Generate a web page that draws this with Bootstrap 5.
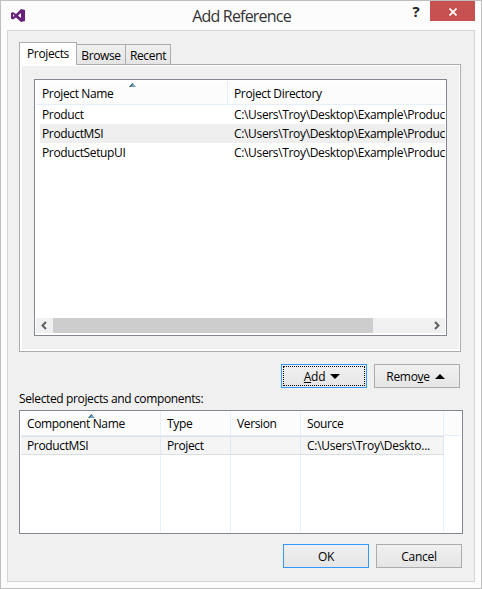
<!DOCTYPE html>
<html lang="en">
<head>
<meta charset="utf-8">
<title>Add Reference</title>
<link href="https://cdn.jsdelivr.net/npm/bootstrap@5.3.0/dist/css/bootstrap.min.css" rel="stylesheet">
<style>
body{font:12px/19px "Open Sans","Noto Sans",sans-serif;letter-spacing:-.36px;color:#000;overflow:hidden}
.window{width:482px;height:589px;background:#fcfcfc;border:1px solid #bfbfbf}
.titlebar{height:29px;padding:0 6px 0 9px}
.title{font-size:16px;line-height:30px;letter-spacing:-.8px;color:#333;padding-left:50px}
.vs-logo{margin-top:7px}
.help{width:18px;height:20px;line-height:20px;font-size:15px;font-weight:700;color:#222;background:none}
.close-btn{width:45px;height:20px;background:#c75050;margin-left:5px;padding:1px 0 0 1px}
.client{width:468px;height:552px;margin-left:6px;padding:11px 11px 0;background:#f0f0f0;border:1px solid #d5d5d5}
.tabs{height:22px;position:relative;z-index:1}
.tab-item{height:21px;border:1px solid #acacac;border-bottom:0;background:linear-gradient(#f0f0f0,#e5e5e5);line-height:21px;text-align:center;margin-right:-1px;margin-bottom:-1px}
.tab-item:not(.active){border-bottom:1px solid #acacac}
.tab-item.active{height:23px;background:#fff;line-height:21px}
.pane{width:442px;height:288px;border:1px solid #acacac;background:#f0f0f0;box-shadow:inset 0 0 0 1px #fff,inset 2px 0 #fff,inset -1px -2px #fff;padding:14px 0 0 14px}
.list{border:1px solid #828790;background:#fff;padding:1px}
.projects{width:413px;height:257px}
.list-head{height:24px;line-height:25px;border-bottom:1px solid #e5eefa;background:#fcfcfc;position:relative}
.sort{position:absolute;top:2px}
.projects .c1{width:192px;padding-left:6px;border-right:1px solid transparent;flex-shrink:0}
.projects .list-head .c1{border-right-color:#e5eefa}
.c2{padding-left:6px;flex-shrink:0}
.prow{height:19px;line-height:19px;margin-left:4px;white-space:nowrap}
.prow .c2{letter-spacing:-.34px}
.projects .prow .c1{width:188px;padding-left:2px}
.prow.sel{background:#efefef}
.scroll{height:15px;background:#f0f0f0;margin-bottom:1px}
.thumb{width:320px;height:15px;background:#cdcdcd}
.push{height:24px;width:86px;border:1px solid #acacac;border-radius:0;background:linear-gradient(#f0f0f0,#e5e5e5);font-size:12px;line-height:21px;letter-spacing:-.3px;padding:0;color:#000}
.push.default{border-color:#3399ff}
.dots{display:flex;align-items:center;justify-content:center;gap:5px;width:82px;height:20px;margin:1px;border:1px dotted #000;padding-right:4px}
.remove{padding-right:3px;gap:5px}
.actions{margin:12px 3px 0 0;gap:7px}
.caption{height:22px;line-height:22px}
.components{width:444px;height:124px}
.grid{height:120px;display:grid;grid-template-columns:140px 70px 70px 143px 1fr;grid-template-rows:24px 19px 1fr;position:relative}
.grid>div{border-right:1px solid #e8f0fb;padding-left:6px;white-space:nowrap;overflow:hidden}
.grid>div:nth-child(5n){border-right:0}
.grid>.h{background:#fcfcfc;border-bottom:1px solid #e5eefa;line-height:24px}
.grid>.s{background:#f5f5f5;border-top:1px solid #dadde2;border-bottom:1px solid #dadde2;border-right-color:#dfe7f1;line-height:17px}
.grid>.path{letter-spacing:-.26px}
.foot{margin:10px 1px 0 0;gap:7px}
</style>
</head>
<body>
<div class="window">
  <header class="titlebar d-flex align-items-start">
    <svg class="vs-logo" width="16" height="16" viewBox="0 0 16 16"><path fill="#68217a" fill-rule="evenodd" d="M11 1l4 1v11l-4 1-5-4.500-3 2-2-1V5l2-1 3 2zM11 5L8 7.500 11 10zM3 6v3l1.500-1.500z"/></svg>
    <div class="title flex-grow-1 text-center">Add Reference</div>
    <button class="help border-0 p-0">?</button>
    <button class="close-btn border-0 d-flex align-items-center justify-content-center" aria-label="Close"><svg width="8" height="8" viewBox="0 0 8 8"><path d="M.5.5l7 7m0-7l-7 7" stroke="#fff" stroke-width="1.7"/></svg></button>
  </header>
  <main class="client">
    <div class="tabs d-flex align-items-end">
      <div class="tab-item active" style="width:58px">Projects</div>
      <div class="tab-item" style="width:50px">Browse</div>
      <div class="tab-item" style="width:46px">Recent</div>
    </div>
    <section class="pane">
      <div class="list projects d-flex flex-column">
        <div class="list-head d-flex">
          <svg class="sort" style="left:93px" width="7" height="4"><path d="M0 4L3.5 0 7 4z" fill="#6fa4bd"/><path d="M0 4L3.5 0 4 1 1.5 4z" fill="#3c5e72"/></svg>
          <div class="c1">Project Name</div><div class="c2">Project Directory</div>
        </div>
        <div class="prow d-flex"><div class="c1">Product</div><div class="c2">C:\Users\Troy\Desktop\Example\Produc</div></div>
        <div class="prow sel d-flex"><div class="c1">ProductMSI</div><div class="c2">C:\Users\Troy\Desktop\Example\Produc</div></div>
        <div class="prow d-flex"><div class="c1">ProductSetupUI</div><div class="c2">C:\Users\Troy\Desktop\Example\Produc</div></div>
        <div class="scroll mt-auto d-flex align-items-center">
          <svg width="17" height="15"><path d="M10 4L6.500 7.500 10 11" fill="none" stroke="#606060" stroke-width="2"/></svg>
          <div class="thumb"></div>
          <svg class="ms-auto" width="17" height="15"><path d="M7 4l3.500 3.500L7 11" fill="none" stroke="#606060" stroke-width="2"/></svg>
        </div>
      </div>
    </section>
    <div class="actions d-flex justify-content-end">
      <button class="btn push default"><span class="dots"><span><u>A</u>dd</span><svg width="10" height="5"><path d="M0 0h10L5 5z"/></svg></span></button>
      <button class="btn push remove d-flex align-items-center justify-content-center"><span>Remo<u>v</u>e</span><svg width="10" height="5"><path d="M0 5h10L5 0z"/></svg></button>
    </div>
    <div class="caption">Selected projects and components:</div>
    <div class="list components">
      <div class="grid">
        <div class="h">Component Name</div><div class="h">Type</div><div class="h">Version</div><div class="h">Source</div><div class="h"></div>
        <div class="s">ProductMSI</div><div class="s">Project</div><div class="s"></div><div class="s path">C:\Users\Troy\Deskto...</div><div></div>
        <div></div><div></div><div></div><div></div><div></div>
        <svg class="sort" style="left:67px" width="7" height="4"><path d="M0 4L3.500 0 7 4z" fill="#6fa4bd"/><path d="M0 4L3.500 0 4 1 1.500 4z" fill="#3c5e72"/></svg>
      </div>
    </div>
    <div class="foot d-flex justify-content-end">
      <button class="btn push default">OK</button>
      <button class="btn push">Cancel</button>
    </div>
  </main>
</div>
<script src="https://cdn.jsdelivr.net/npm/bootstrap@5.3.0/dist/js/bootstrap.bundle.min.js"></script>
</body>
</html>
